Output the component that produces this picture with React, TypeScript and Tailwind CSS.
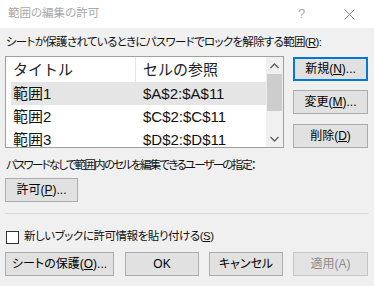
import React from "react";

const font = {
  fontFamily: '"Liberation Sans", "Noto Sans CJK JP", sans-serif',
};

function Btn({
  children,
  className = "",
  focused = false,
  disabled = false,
}: {
  children: React.ReactNode;
  className?: string;
  focused?: boolean;
  disabled?: boolean;
}) {
  return (
    <div
      className={
        "h-[24px] flex items-center justify-center text-[12px] leading-none " +
        (focused
          ? "border-2 border-[#0078d7] bg-[#e1e1e1] text-black "
          : disabled
          ? "border border-[#c4c4c4] bg-[#e3e3e3] text-[#8c8c8c] "
          : "border border-[#adadad] bg-[#e1e1e1] text-black ") +
        className
      }
    >
      {children}
    </div>
  );
}

const rows = [
  { name: "範囲1", ref: "$A$2:$A$11", sel: true },
  { name: "範囲2", ref: "$C$2:$C$11", sel: false },
  { name: "範囲3", ref: "$D$2:$D$11", sel: false },
];

export default function App() {
  return (
    <div
      className="w-[374px] h-[286px] bg-[#f0f0f0] overflow-hidden text-[#111] [font-feature-settings:'palt']"
      style={font}
    >
      {/* title bar */}
      <div className="h-[28px] bg-white flex items-center pl-[8px] text-[11.5px] text-[#a8a8a8]">
        <span className="flex-1">範囲の編集の許可</span>
        <span className="w-[10px] text-[13px] mr-[36px]">?</span>
        <svg width="11" height="11" viewBox="0 0 11 11" className="mr-[19px]">
          <path d="M0.5 0.5L10.5 10.5M10.5 0.5L0.5 10.5" stroke="#8a8a8a" strokeWidth="1" />
        </svg>
      </div>

      <div className="px-[5px]">
        <div className="mt-[6px] h-[16px] leading-[16px] text-[11.5px] tracking-[-0.7px] pl-[1px] whitespace-nowrap">
          シートが保護されているときにパスワードでロックを解除する範囲(<span className="underline">R</span>):
        </div>

        <div className="mt-[6px] flex">
          {/* list box */}
          <div className="w-[279px] h-[92px] border border-[#a0a0a0] bg-white flex [font-feature-settings:normal]">
            <div className="flex-1 overflow-hidden">
              <div className="h-[25px] flex items-center text-[15px] leading-none text-[#222]">
                <div className="w-[130px] h-full flex items-center pl-[7px] border-r border-[#e5e5e5]">
                  タイトル
                </div>
                <div className="pl-[7px]">セルの参照</div>
              </div>
              {rows.map((r) => (
                <div
                  key={r.name}
                  className={
                    "ml-[5px] h-[23px] flex items-center text-[15px] leading-none " +
                    (r.sel ? "bg-[#e5e5e5]" : "")
                  }
                >
                  <div className="w-[132px] pl-[2px]">{r.name}</div>
                  <div>{r.ref}</div>
                </div>
              ))}
            </div>
            {/* scrollbar */}
            <div className="w-[17px] bg-[#f0f0f0] flex flex-col">
              <div className="h-[17px] flex items-center justify-center">
                <svg width="9" height="6" viewBox="0 0 9 6">
                  <path d="M0.5 5L4.5 1L8.5 5" stroke="#606060" strokeWidth="1.4" fill="none" />
                </svg>
              </div>
              <div className="mx-[1px] h-[37px] bg-[#cdcdcd]" />
              <div className="flex-1" />
              <div className="h-[17px] flex items-center justify-center">
                <svg width="9" height="6" viewBox="0 0 9 6">
                  <path d="M0.5 1L4.5 5L8.5 1" stroke="#606060" strokeWidth="1.4" fill="none" />
                </svg>
              </div>
            </div>
          </div>

          {/* side buttons */}
          <div className="ml-[9px] w-[75px] flex flex-col">
            <Btn focused className="mt-[1px]">
              新規(<span className="underline">N</span>)...
            </Btn>
            <Btn className="mt-[9px]">
              変更(<span className="underline">M</span>)...
            </Btn>
            <Btn className="mt-[10px]">
              削除(<span className="underline">D</span>)
            </Btn>
          </div>
        </div>

        <div className="mt-[9px] h-[16px] leading-[16px] text-[11.5px] tracking-[-1.8px] pl-[1px] whitespace-nowrap">
          パスワードなしで範囲内のセルを編集できるユーザーの指定：
        </div>
        <Btn className="mt-[5px] w-[73px]">
          許可(<span className="underline">P</span>)...
        </Btn>

        <div className="mt-[11px] h-px bg-[#dadada] w-[364px]" />

        <div className="mt-[15px] h-[16px] flex items-center text-[11.5px]">
          <div className="ml-[1px] w-[13px] h-[13px] border border-[#333333] bg-white" />
          <span className="ml-[5px] tracking-[-0.45px] whitespace-nowrap">
            新しいブックに許可情報を貼り付ける(<span className="underline">S</span>)
          </span>
        </div>

        <div className="mt-[7px] flex">
          <Btn className="w-[109px]">
            シートの保護(<span className="underline">O</span>)...
          </Btn>
          <Btn className="ml-[11px] w-[74px]">OK</Btn>
          <Btn className="ml-[10px] w-[74px]">キャンセル</Btn>
          <Btn disabled className="ml-[10px] w-[75px]">
            適用(A)
          </Btn>
        </div>
      </div>
    </div>
  );
}
